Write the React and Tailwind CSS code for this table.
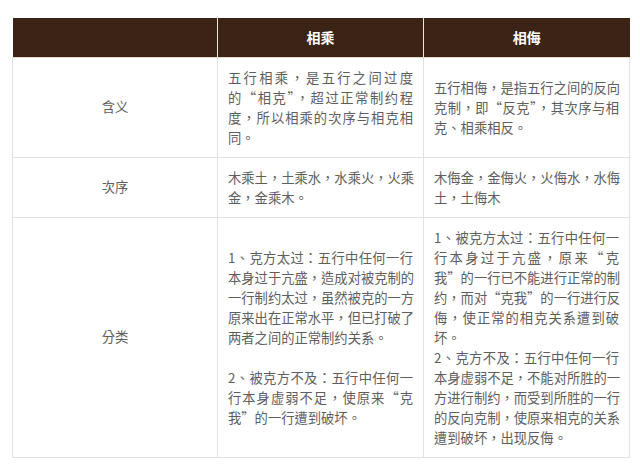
import React from "react";

const rows = [
  {
    label: "含义",
    a: [["五行相乘，是五行之间过度", "的“相克”，超过正常制约程", "度，所以相乘的次序与相克相", "同。"]],
    b: [["五行相侮，是指五行之间的反向", "克制，即“反克”，其次序与相", "克、相乘相反。"]],
  },
  {
    label: "次序",
    a: [["木乘土，土乘水，水乘火，火乘", "金，金乘木。"]],
    b: [["木侮金，金侮火，火侮水，水侮", "土，土侮木"]],
  },
  {
    label: "分类",
    a: [
      ["1、克方太过：五行中任何一行", "本身过于亢盛，造成对被克制的", "一行制约太过，虽然被克的一方", "原来出在正常水平，但已打破了", "两者之间的正常制约关系。"],
      [],
      ["2、被克方不及：五行中任何一", "行本身虚弱不足，使原来“克", "我”的一行遭到破坏。"],
    ],
    b: [
      ["1、被克方太过：五行中任何一", "行本身过于亢盛，原来“克", "我”的一行已不能进行正常的制", "约，而对“克我”的一行进行反", "侮，使正常的相克关系遭到破", "坏。"],
      ["2、克方不及：五行中任何一行", "本身虚弱不足，不能对所胜的一", "方进行制约，而受到所胜的一行", "的反向克制，使原来相克的关系", "遭到破坏，出现反侮。"],
    ],
  },
];

// each paragraph is a list of lines; all lines but the last are spread edge to edge
const Cell = ({ paras }) => (
  <td className="border border-[#e2e2e2] px-[10px] pt-[10px] pb-[9px] align-middle">
    {paras.map((lines, i) =>
      lines.length === 0 ? (
        <div key={i} className="h-[20px]" />
      ) : (
        <div key={i}>
          {lines.map((line, j) => (
            <div
              key={j}
              className={
                j < lines.length - 1
                  ? "text-justify [text-align-last:justify] whitespace-nowrap"
                  : "text-left whitespace-nowrap"
              }
            >
              {line}
            </div>
          ))}
        </div>
      )
    )}
  </td>
);

export default function App() {
  return (
    <div
      className="w-[640px] h-[474px] bg-white pt-[18px] pl-[12px]"
      style={{ fontFamily: '"Noto Sans CJK TC", "Noto Sans CJK SC", "Noto Sans", sans-serif' }}
    >
      <table className="w-[617px] table-fixed border-collapse text-[13.3px] leading-[20px] text-[#5e5e5e]">
        <colgroup>
          <col className="w-[205px]" />
          <col className="w-[206px]" />
          <col className="w-[206px]" />
        </colgroup>
        <thead>
          <tr className="h-[39px] bg-[#3b2415] text-white text-[14px] font-bold">
            <th className="border-b border-b-[#e9d9c4] border-r border-r-[#f1e6d6]"></th>
            <th className="border-b border-b-[#e9d9c4] border-r border-r-[#f1e6d6]">相乘</th>
            <th className="border-b border-b-[#e9d9c4]">相侮</th>
          </tr>
        </thead>
        <tbody>
          {rows.map((r) => (
            <tr key={r.label}>
              <td className="border border-[#e2e2e2] text-center align-middle">{r.label}</td>
              <Cell paras={r.a} />
              <Cell paras={r.b} />
            </tr>
          ))}
        </tbody>
      </table>
    </div>
  );
}
